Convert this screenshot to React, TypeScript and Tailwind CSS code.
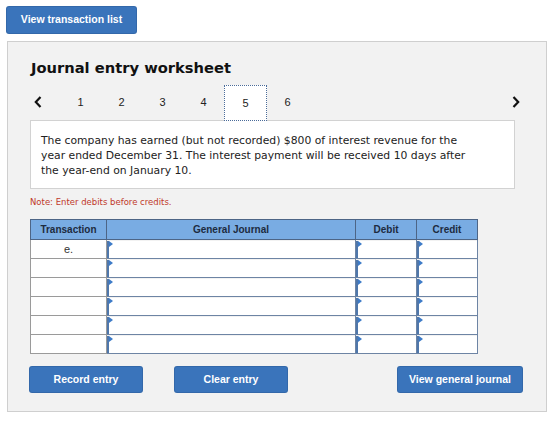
import React from "react";

const SANS = "font-['Liberation_Sans',Arial,sans-serif]";
const VERD = "font-['DejaVu_Sans',Verdana,sans-serif]";

function Btn({ children, cls }: { children: React.ReactNode; cls: string }) {
  return (
    <button
      className={`${cls} block rounded-[2px] bg-[#3a74bb] text-white text-[10.5px] font-bold ${SANS} shadow-[0_0_0_1px_#3368aa]`}
    >
      {children}
    </button>
  );
}

function InputCell({ w }: { w: string }) {
  return (
    <td className={`${w} p-0 border border-[#6d84a4]`}>
      <div className="relative h-[17px] bg-white border-l-2 border-[#4f77ab]">
        <span className="absolute left-0 top-0 w-0 h-0 border-t-[3px] border-b-[3px] border-l-[4px] border-t-transparent border-b-transparent border-l-[#3d7bc8]" />
      </div>
    </td>
  );
}

export default function App() {
  const rows = ["e.", "", "", "", "", ""];
  const pages = [1, 2, 3, 4, 5, 6];
  return (
    <div className="w-[560px] h-[429px] bg-white pt-[7px] pl-[7px]">
      <Btn cls="w-[129px] h-[26px]">View transaction list</Btn>

      {/* Worksheet panel */}
      <div className="mt-[8px] w-[540px] h-[371px] bg-[#f2f2f2] border border-[#cfcfcf] pl-[22px] pt-[16px]">
        <h1 className={`${VERD} text-[14.7px] font-bold text-[#111] leading-[20px] pl-[1px]`}>
          Journal entry worksheet
        </h1>

        {/* Step nav */}
        <div className={`mt-[6px] h-[36px] flex items-center ${SANS} text-[11px] text-[#222] w-[490px]`}>
          <span className="w-[30px] pl-[4px]">
            <svg width="8" height="12" viewBox="0 0 8 12">
              <path d="M6.5 1 L1.8 6 L6.5 11" fill="none" stroke="#111" strokeWidth="2.2" />
            </svg>
          </span>
          {pages.map((p) =>
            p === 5 ? (
              <span
                key={p}
                className="w-[43px] h-[36px] flex items-center justify-center bg-white border-[1.5px] border-dotted border-[#4a6b99] relative top-[1px]"
              >
                {p}
              </span>
            ) : (
              <span key={p} className="w-[41px] text-center">
                {p}
              </span>
            )
          )}
          <span className="ml-auto">
            <svg width="8" height="12" viewBox="0 0 8 12">
              <path d="M1.5 1 L6.2 6 L1.5 11" fill="none" stroke="#111" strokeWidth="2.2" />
            </svg>
          </span>
        </div>

        {/* Question */}
        <div
          className={`w-[485px] h-[69px] bg-white border border-[#d2d2d2] pl-[10px] pr-[38px] pt-[12px] ${VERD} text-[10.8px] leading-[15px] text-[#222]`}
        >
          The company has earned (but not recorded) $800 of interest revenue for the year ended December
          31. The interest payment will be received 10 days after the year-end on January 10.
        </div>

        <p className={`mt-[7px] ${VERD} text-[8.5px] leading-[12px] text-[#c0392b]`}>
          Note: Enter debits before credits.
        </p>

        {/* Journal table */}
        <table className={`mt-[11px] border-collapse ${SANS} text-[10px]`}>
          <thead>
            <tr className="h-[20px] bg-[#79ace3] text-[#1d2b3f] font-bold">
              <th className="w-[76px] border border-[#4d6586]">Transaction</th>
              <th className="w-[249px] border border-[#4d6586]">General Journal</th>
              <th className="w-[61px] border border-[#4d6586]">Debit</th>
              <th className="w-[61px] border border-[#4d6586]">Credit</th>
            </tr>
          </thead>
          <tbody>
            {rows.map((r, i) => (
              <tr key={i} className="h-[19px]">
                <td className="w-[76px] bg-white border border-[#9a9a9a] text-center text-[11px] text-[#333] leading-[17px]">
                  {r}
                </td>
                <InputCell w="w-[249px]" />
                <InputCell w="w-[61px]" />
                <InputCell w="w-[61px]" />
              </tr>
            ))}
          </tbody>
        </table>

        {/* Actions */}
        <div className="mt-[13px] flex items-start w-[492px]">
          <Btn cls="w-[112px] h-[25px]">Record entry</Btn>
          <Btn cls="w-[112px] h-[25px] ml-[33px]">Clear entry</Btn>
          <Btn cls="w-[124px] h-[25px] ml-auto">View general journal</Btn>
        </div>
      </div>
    </div>
  );
}
